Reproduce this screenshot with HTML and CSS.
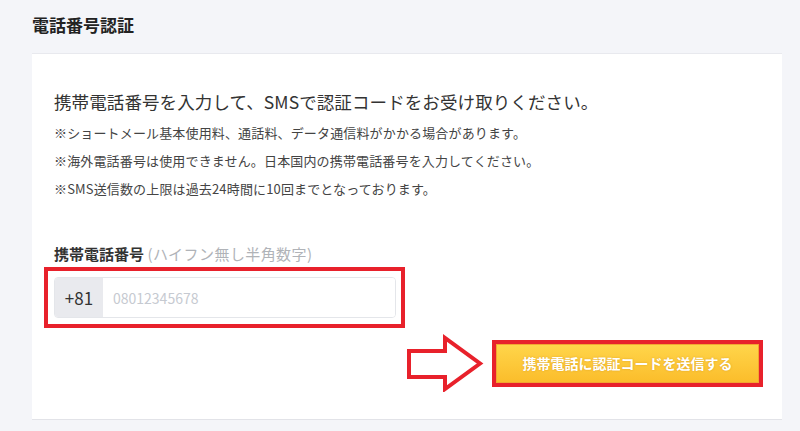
FILE: index.html
```html
<!DOCTYPE html>
<html lang="ja">
<head>
<meta charset="utf-8">
<title>電話番号認証</title>
<link rel="stylesheet" href="styles.css">
</head>
<body>
<header class="page-head">
  <h1 class="page-title">電話番号認証</h1>
</header>
<section class="card">
  <p class="lead">携帯電話番号を入力して、SMSで認証コードをお受け取りください。</p>
  <ul class="notes">
    <li>※ショートメール基本使用料、通話料、データ通信料がかかる場合があります。</li>
    <li>※海外電話番号は使用できません。日本国内の携帯電話番号を入力してください。</li>
    <li>※SMS送信数の上限は過去24時間に10回までとなっております。</li>
  </ul>
  <label class="field-label" for="tel">携帯電話番号 <span class="field-hint">(ハイフン無し半角数字)</span></label>
  <div class="highlight-box">
    <div class="input-group">
      <span class="addon">+81</span>
      <input class="tel-input" id="tel" type="tel" placeholder="08012345678">
    </div>
  </div>
  <div class="action-row">
    <svg class="arrow" width="80" height="58" viewBox="0 0 80 58" aria-hidden="true">
      <polygon points="4,17 40,17 40,4 75,29.5 40,55 40,43 4,43" fill="#ffffff" stroke="#e8212b" stroke-width="4" stroke-linejoin="miter"/>
    </svg>
    <div class="highlight-btn">
      <button class="send-btn" type="button">携帯電話に認証コードを送信する</button>
    </div>
  </div>
</section>
</body>
</html>
```

FILE: styles.css
```css
* { box-sizing: border-box; }

html, body {
  margin: 0;
  padding: 0;
}

body {
  background: #f4f5f9;
  font-family: "Noto Sans CJK JP", "Noto Sans", sans-serif;
  color: #333;
}

.page-head {
  padding: 13px 32px 16px;
}

.page-title {
  margin: 0;
  font-size: 17px;
  line-height: 24px;
  font-weight: 700;
  color: #222;
}

.card {
  margin: 0 18px 0 32px;
  background: #ffffff;
  border-top: 1px solid #e8e9ee;
  border-bottom: 1px solid #e2e3e8;
  padding: 34px 22px 27px;
}

.lead {
  margin: 0;
  font-size: 17.5px;
  letter-spacing: 0.1px;
  line-height: 28px;
  color: #333;
}

.notes {
  list-style: none;
  margin: 3px 0 0;
  padding: 0;
}

.notes li {
  font-size: 13px;
  letter-spacing: 0.15px;
  line-height: 28px;
  color: #444;
}

.field-label {
  display: block;
  margin-top: 41px;
  font-size: 15px;
  line-height: 20px;
  font-weight: 700;
  color: #333;
}

.field-hint {
  font-weight: 400;
  letter-spacing: 0.4px;
  color: #b0b3b8;
}

.highlight-box {
  width: 361px;
  margin: 3px 0 0 -10px;
  border: 4px solid #e8212b;
  padding: 6px 5px 6px 6px;
}

.input-group {
  display: flex;
  height: 41px;
  border: 1px solid #e4e6ea;
  border-radius: 4px;
  overflow: hidden;
  background: #fff;
}

.addon {
  width: 48px;
  flex: none;
  display: flex;
  align-items: center;
  justify-content: center;
  background: #e9eaee;
  font-size: 17px;
  color: #333;
}

.tel-input {
  flex: 1;
  min-width: 0;
  border: 0;
  outline: none;
  padding: 0 10px;
  font-family: inherit;
  font-size: 14px;
  color: #333;
  background: #fff;
}

.tel-input::placeholder {
  color: #c6cad1;
}

.action-row {
  display: flex;
  justify-content: flex-end;
  align-items: center;
  gap: 7px;
  margin: 6px -3px 0 0;
}

.arrow {
  display: block;
  flex: none;
}

.highlight-btn {
  border: 4px solid #e8212b;
}

.send-btn {
  display: block;
  width: 263px;
  height: 39px;
  border: 1px solid #f2a531;
  background: linear-gradient(#ffd54a, #fbbd2b);
  color: #ffffff;
  font-family: inherit;
  font-size: 14px;
  font-weight: 700;
  text-shadow: 0 0 2px rgba(180, 110, 0, 0.45);
  cursor: pointer;
  padding: 0;
}
```
